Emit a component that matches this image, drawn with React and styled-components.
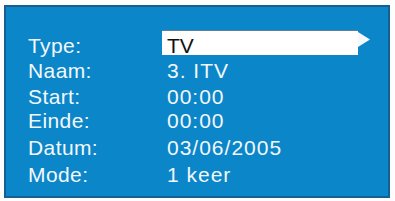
import styled, { createGlobalStyle } from "styled-components";

const GlobalStyle = createGlobalStyle`
  html, body {
    margin: 0;
    padding: 0;
    background: #fdfdfd;
  }
  body {
    width: 395px;
    height: 201px;
    overflow: hidden;
    font-family: "Liberation Sans", Arial, sans-serif;
  }
`;

const Panel = styled.div`
  box-sizing: border-box;
  width: 386px;
  height: 193px;
  margin: 5px 0 0 4px;
  padding: 26px 0 0 22px;
  background: #0b86c9;
  border: 2px solid #175f93;
  color: #f3f8fb;
  font-size: 21px;
`;

const Row = styled.div`
  display: flex;
  align-items: flex-start;
  height: ${(p) => p.$h}px;
  line-height: 25px;
`;

const Label = styled.div`
  width: 134px;
  flex: none;
  letter-spacing: 0.4px;
`;

const Value = styled.div`
  padding-left: 5px;
  letter-spacing: 1px;
`;

const Selector = styled.div`
  display: flex;
  align-items: flex-start;
  margin-top: -3px;
`;

const SelectBox = styled.div`
  box-sizing: border-box;
  width: 196px;
  height: 25px;
  padding: 3px 0 0 5px;
  background: #ffffff;
  color: #111;
  box-shadow: inset 0 1px 0 #5b7f98;
`;

const Arrow = () => (
  <svg width="12" height="25" viewBox="0 0 12 25" style={{ display: "block" }}>
    <polygon points="0,2 12,9.5 0,17" fill="#f4f8fb" />
  </svg>
);

const rows = [
  { label: "Naam:", value: "3. ITV", h: 26 },
  { label: "Start:", value: "00:00", h: 24 },
  { label: "Einde:", value: "00:00", h: 27 },
  { label: "Datum:", value: "03/06/2005", h: 27 },
  { label: "Mode:", value: "1 keer", h: 25 },
];

export default function App() {
  return (
    <>
      <GlobalStyle />
      <Panel>
        <Row $h={25}>
          <Label>Type:</Label>
          <Selector>
            <SelectBox>TV</SelectBox>
            <Arrow />
          </Selector>
        </Row>
        {rows.map((r) => (
          <Row key={r.label} $h={r.h}>
            <Label>{r.label}</Label>
            <Value>{r.value}</Value>
          </Row>
        ))}
      </Panel>
    </>
  );
}
